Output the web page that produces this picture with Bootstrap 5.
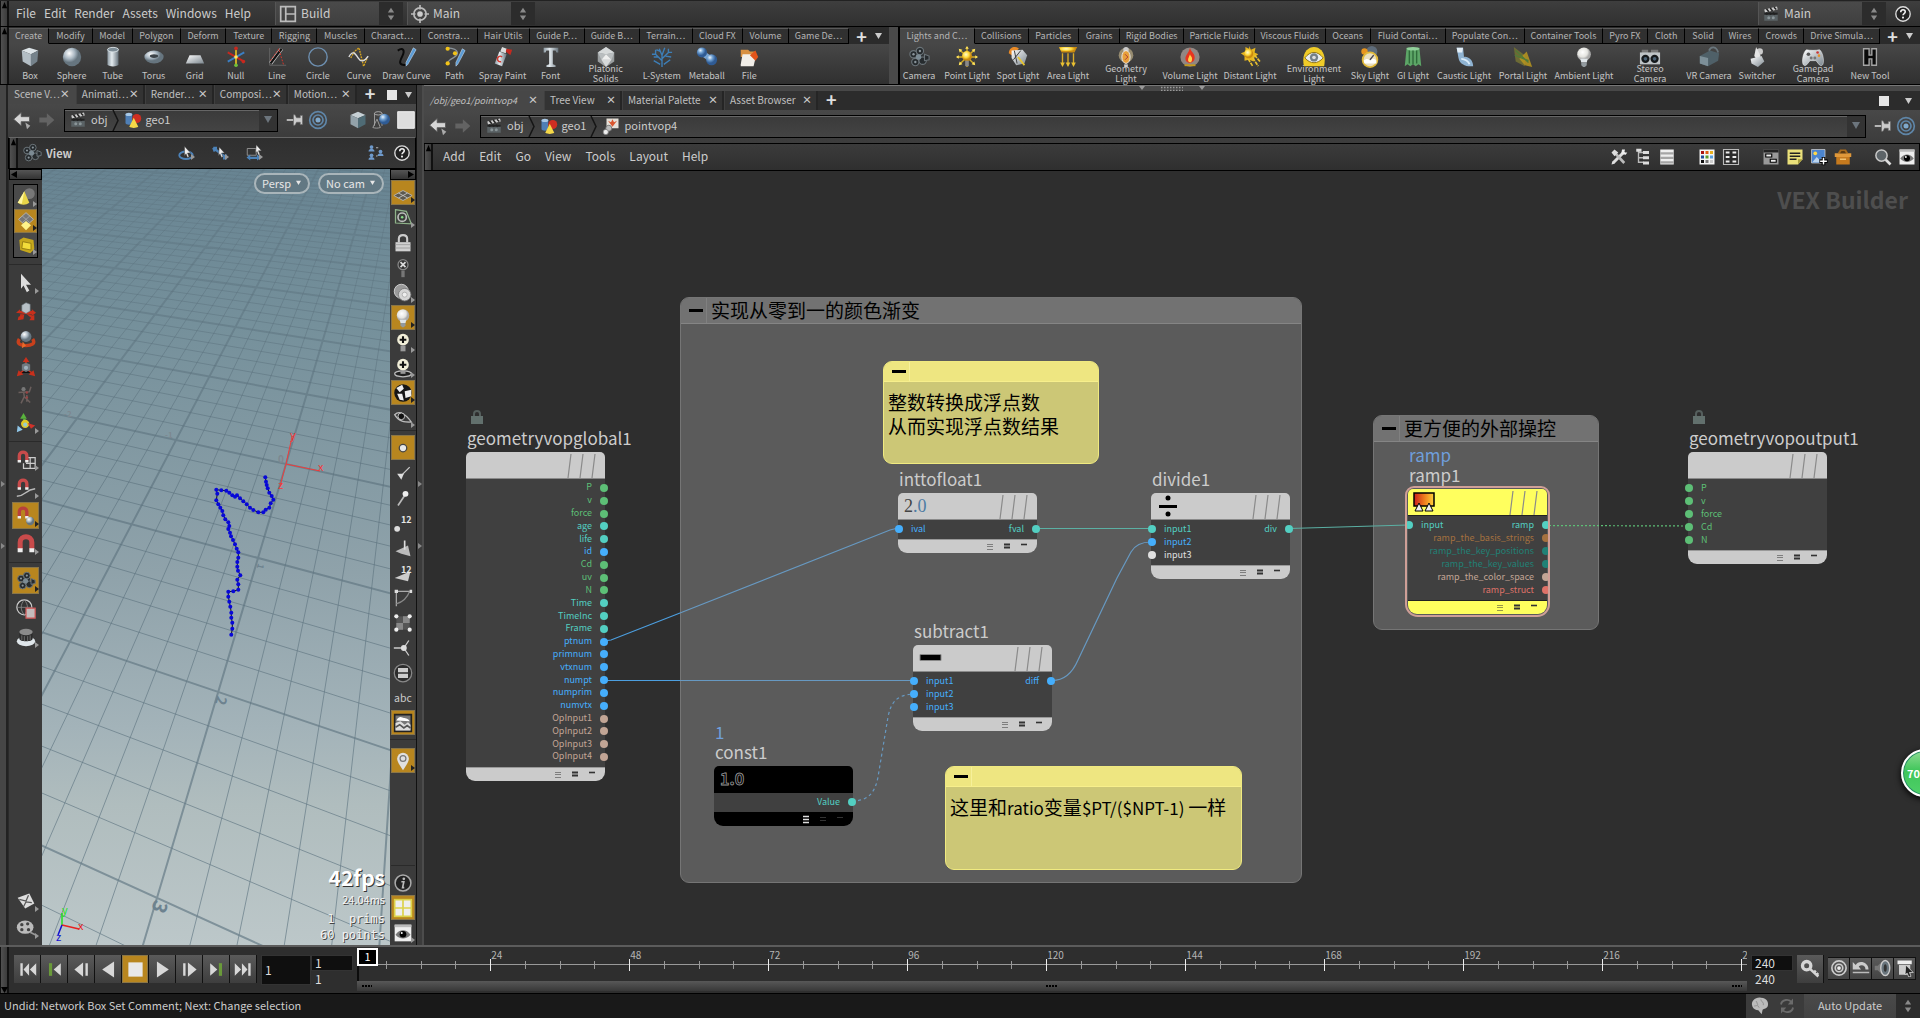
<!DOCTYPE html>
<html lang="en">
<head>
<meta charset="utf-8">
<meta name="viewport" content="width=device-width, initial-scale=1">
<title>pointvop4 - VEX Builder</title>
<link href="https://cdn.jsdelivr.net/npm/bootstrap@5.3.0/dist/css/bootstrap.min.css" rel="stylesheet">
<style>
:root{--ui:"Noto Sans CJK SC","Open Sans",sans-serif}
body{font-family:var(--ui);font-size:12px;line-height:16px;color:#ccc;background:#2e2e2e;height:100vh}
button,select,input{font:inherit;color:inherit}
.btn{--bs-btn-padding-x:0;--bs-btn-padding-y:0;--bs-btn-border-width:0;--bs-btn-font-size:inherit;--bs-btn-line-height:inherit;--bs-btn-color:#ccc;--bs-btn-border-radius:0;--bs-btn-hover-color:#fff;--bs-btn-font-family:inherit}
svg{display:block;flex:none}
.ic{width:24px;height:24px}.ic-20{width:20px;height:20px}.ic-18{width:18px;height:18px}
.mb-px{margin-bottom:1px}.min-w-0{min-width:0}.min-h-0{min-height:0}
/* main menu */
.topbar{height:27px;background:linear-gradient(#3e3e3e,#303030);border-bottom:1px solid #000;border-top:1px solid #222}
.topbar nav{padding-left:7px}
.grip-v{width:9px;background:linear-gradient(90deg,#505050,#3c3c3c);border:1px solid #111;border-width:0 2px 0 1px;flex:none}
.grip-v svg{width:7px;height:7px;margin-top:1px}
.menu-link{color:#ccc;text-decoration:none;white-space:nowrap;padding-bottom:2px}
.menu-link:hover{color:#fff}
.combo{height:23px;background:linear-gradient(#4a4a4a,#3f3f3f)}
.combo select,.auto select{appearance:none;background:transparent;border:0;outline:0;padding:0 0 2px;height:23px}
.combo .sel{width:104px;padding-left:3px;border-left:1px solid #555}
.combo .spin,.auto .spin{width:24px;align-self:stretch;background:#2c2c2c}
.desk{margin-left:16px}
/* shelves */
.shelf-row{height:58px;border-bottom:1px solid #000}
.shelf-tabs{height:17px;background:#2b2b2b}
.shelf-tab{flex:1 1 0;font-size:9px;line-height:14px;color:#b5b5b5;background:#303030;border-right:1px solid #000;border-top:1px solid #5a5a5a;border-bottom:1px solid #000;text-align:center;white-space:nowrap;overflow:hidden;margin-top:1px;padding:0;border-left:0}
.shelf-tab.active{background:#474747;border-bottom-color:#474747}
.shelf-plus{width:40px;flex:none}
.shelf-body{height:40px;background:linear-gradient(#474747,#303030)}
.tool{flex:1 1 0;min-width:0;font-size:9px;line-height:9px;white-space:nowrap;padding-top:2px}
.tool .ic{width:24px;height:22px}
.tool .cap1{padding-top:2px;line-height:12px;color:#c4c4c4}
.tool .cap2{margin-top:-4px;color:#c4c4c4;position:relative;line-height:10px}
.shelf-split{width:11px;background:#4a4a4a;border-right:2px solid #000;flex:none}
.splitbar{height:6px;background:#484848;border-top:1px solid #777}
/* panes */
.left-pane{width:424px;flex:none}
.strip{width:8px;background:#464646;border-right:2px solid #222;flex:none}
.strip2{width:8px;background:#3c3c3c;border-left:1px solid #111;border-right:2px solid #4c4c4c;flex:none}
.dots{width:4px;height:20px;background-image:radial-gradient(#888 35%,transparent 40%);background-size:2px 2px}
.strip,.strip2{gap:18px}
.pane-tabs{height:19px;background:#2c2c2c;font-size:10px;line-height:16px}
.pane-tab{background:#333;border:0;border-left:1px solid #3f3f3f;border-right:2px solid #252525;padding:0 4px 0 5px;color:#c0c0c0;white-space:nowrap;font-size:10px;line-height:17px}
.pane-tab.active{background:#474747;border-color:#474747}
.pane-tab em{font-size:9px}
.pane-tab .x{font-size:10px;font-weight:700;color:#ccc}
.plus{font-size:18px;line-height:16px;font-weight:700;color:#e0e0e0}
.pathbar{height:33px;background:linear-gradient(#484848,#3c3c3c);padding-bottom:1px}
.pathfield{height:23px;background:linear-gradient(#3a3a3a,#444);border:1px solid #000;box-shadow:inset 0 1px 0 #666;font-size:11px}
.pathfield>span{line-height:14px;padding-bottom:2px}
.pathfield .drop{width:18px;align-self:stretch;background:#333}
.chev{width:8px;height:21px;margin:0 4px}
.viewbar{height:32px;background:linear-gradient(#2f2f2f,#353535);border:1px solid #000;border-top:1px solid #666;font-size:11px}
.menubar{height:28px;background:linear-gradient(#3b3b3b,#2f2f2f);border:1px solid #000;border-width:1px 1px 1px 0}
.menubar nav{gap:14px;padding-left:10px}
.net-ic{width:18px;height:18px;margin:0 3px}
/* viewer */
.vtools{width:34px;background:#3b3b3b;flex:none;overflow:hidden;border-left:1px solid #2a2a2a}
.vtools-r{width:26px;background:#3b3b3b;flex:none;overflow:hidden}
.scroller{height:11px;background:linear-gradient(#555,#333);border:1px solid #000}
.vt{width:27px;height:27px;position:relative;flex:none}
.rt{width:24px;height:25px;position:relative;flex:none}
.on{background:#b8861f!important;box-shadow:inset 0 0 0 1px #8a7648}
.more::after{content:"";position:absolute;right:0;bottom:2px;border:3px solid transparent;border-left:4px solid #999;border-right:0}
.more.on::after{border-left-color:#222}
.mode-box{background:#4a4a4a;border:1px solid #000;width:25px;margin:4px 0 6px}
.mode-box .vt{width:23px;height:24px}
.sep{height:1px;background:#2a2a2a;align-self:stretch}
.viewport{background:linear-gradient(#688492 0,#75909b 20%,#8fa2aa 52%,#a3b3b9 72%,#b0bdbe 82%,#bcc7c9 100%)}
.cam-row{padding:4px 6px}
.cam-pill{border:2px solid #a9b5ba;border-radius:11px;height:21px;font-size:11px;line-height:14px;padding:0 6px 2px;background:#627883;color:#e6e6e6}
.fps{font-size:21px;line-height:24px;font-weight:700;margin-bottom:3px;color:#fff;text-shadow:1px 1px 0 #333}
.stat-sm{font-size:11px;line-height:15px;color:#f4f4f4;text-shadow:1px 1px 0 #444}
.stat-mono{font-family:"DejaVu Sans Mono",monospace;font-size:12px;line-height:16px;color:#f2f2f2;text-shadow:1px 1px 0 #444;white-space:pre}
.hud{right:5px;bottom:2px}
/* network canvas */
.canvas{background:#2e2e2e}
.vex{right:12px;top:10px;font-size:23px;line-height:36px;font-weight:700;color:#4e4e4e}
.netbox{background:#5b5b5b;border:1px solid #757575;border-radius:9px;overflow:hidden}
.netbox>.hd{height:26px;background:#727272;border-bottom:1px solid #858585;color:#000;font-size:19px;line-height:23px}
.min-mark{width:26px;padding-left:4px;align-self:stretch;border-right:1px solid #808080}
.min-mark i{width:14px;height:3px;background:#000}
.sticky{background:#ccc776;border:1px solid #f0ea80;border-radius:9px;overflow:hidden;color:#000}
.sticky>.hd{height:20px;background:#eee681;border-bottom:1px solid #f7ef8c}
.sticky .min-mark{border-color:#f6f09a}
.sticky p{margin:0;padding:8px 4px;font-size:19px;line-height:24px;white-space:nowrap}
.sticky .lat{font-size:17px}
.node{width:139px}
.node-name{position:absolute;bottom:100%;left:1px;font-size:17px;line-height:20px;padding-bottom:4px;white-space:nowrap;color:#ccc}
.node-name .sub{color:#6f9fdc}
.node-hd{height:27px;background:#cbcbcb;border-radius:5px 5px 0 0;border-bottom:1px solid #8a8a8a;padding-left:4px}
.node-bd{background:#404040;padding:2px 0 4px}
.node-bd.tall{height:288px}
.node-ft{height:14px;background:#cbcbcb;border-radius:0 0 9px 9px;border-top:1px solid #999;color:#333}
.port{height:13px;font-size:9px;line-height:11px;flex:0 1 13px;min-height:0;margin:0 -3px}
.port i{width:8px;height:8px;border-radius:50%;background:currentColor;margin-top:1px}
.port .lab{padding:0 8px 1px;white-space:nowrap}
.black .node-hd,.black .node-ft{background:#000;border-color:#000;color:#999}
.black .slash{display:none}
.yellow{outline:2px solid #cf9f97;outline-offset:1px;border-radius:6px 6px 10px 10px}
.yellow .node-hd,.yellow .node-ft{background:#ffff5e;border-color:#222}
.c-g{color:#5dbf76}.c-t{color:#53cfc2}.c-b{color:#45aefc}.c-p{color:#c2a595}.c-w{color:#e0e0e0}.c-br{color:#a5713f}.c-dt{color:#218176}.c-r{color:#de7268}
.bubble{right:-29px;top:578px;width:48px;height:48px;border-radius:50%;background:linear-gradient(#8fdc92,#3fc65a 45%,#4fd068);border:2px solid #fff;box-shadow:0 2px 6px #000,inset 0 0 0 1px #27886a;color:#fff;font-weight:700;font-size:11px;line-height:44px;padding:0 0 0 4px;text-align:left}
/* playbar */
.playbar{height:48px;border-top:2px solid #5c5c5c;background:#2e2e2e}
.transport{padding:8px 0 0 5px}
.pb{width:27px;height:28px;background:linear-gradient(#5a5a5a,#3e3e3e);border-right:1px solid #111!important}
.frame-in{background:#0f0f0f;border:1px solid #333;color:#ddd;font-size:12px;padding:0 3px 2px;border-radius:0}
.frame-cur{width:50px;height:30px}
.rng{width:42px;height:16px;line-height:14px}
.rng.plain{background:transparent;border-color:transparent}
.ruler{height:34px}
.ruler .base{left:0;right:0;top:17px;height:1px;background:#999}
.tick{width:1px;background:#999;top:14px;height:8px}
.tick.maj{background:#eee;top:12px;height:12px}
.tlab{font-size:10px;line-height:12px;top:2px;padding-left:1px;color:#b5b5b5}
.cursor{width:21px;height:18px;left:0;top:1px;border:2px solid #fff;background:#000;color:#fff;font-size:11px;line-height:13px;text-align:center;z-index:2}
.head{width:2px;left:0;top:19px;bottom:0;background:#0c0c0c}
.rscroll{height:10px;background:linear-gradient(#585858,#383838)}
.sm-b{width:22px;height:23px;background:linear-gradient(#5a5a5a,#444);border:1px solid #111!important;border-left:0!important}
.statusbar{height:25px;background:#191919;border-top:1px solid #000;font-size:11px;line-height:22px}
.auto{background:#3b3b3b}
.auto select{width:92px;background:linear-gradient(#4a4a4a,#424242);text-align:center;font-size:11px;height:24px}
</style>
<script src="https://cdn.jsdelivr.net/npm/bootstrap@5.3.0/dist/js/bootstrap.bundle.min.js"></script>
</head>
<body class="d-flex flex-column overflow-hidden m-0">

<svg width="0" height="0" class="position-absolute" aria-hidden="true">
<defs>
<linearGradient id="m" x1="0" x2="1" y1="0" y2="1"><stop stop-color="#fff"/><stop offset="1" stop-color="#7b868e"/></linearGradient>
<linearGradient id="mh"><stop stop-color="#8d9aa3"/><stop offset=".4" stop-color="#e4ebef"/><stop offset="1" stop-color="#66727b"/></linearGradient>
<radialGradient id="bl" cx=".35" cy=".3"><stop stop-color="#e8f4ff"/><stop offset=".5" stop-color="#6f9fd0"/><stop offset="1" stop-color="#2f5b94"/></radialGradient>
<radialGradient id="gy" cx=".35" cy=".3"><stop stop-color="#fff"/><stop offset=".6" stop-color="#a9b7c2"/><stop offset="1" stop-color="#66757f"/></radialGradient>
<radialGradient id="wh" cx=".4" cy=".35"><stop stop-color="#fff"/><stop offset=".7" stop-color="#e4e4e0"/><stop offset="1" stop-color="#aaa"/></radialGradient>
<radialGradient id="ye" cx=".4" cy=".35"><stop stop-color="#fffbd0"/><stop offset=".6" stop-color="#ffd93a"/><stop offset="1" stop-color="#c98a10"/></radialGradient>
<linearGradient id="rampg"><stop stop-color="#c81e1e"/><stop offset=".5" stop-color="#ee7a1c"/><stop offset="1" stop-color="#ffd23a"/></linearGradient>
<linearGradient id="gmi" gradientUnits="userSpaceOnUse" x1="0" x2="0" y1="0" y2="777"><stop stop-color="#5a707c" stop-opacity=".35"/><stop offset=".4" stop-color="#5a707c" stop-opacity=".6"/><stop offset="1" stop-color="#6b808b" stop-opacity=".75"/></linearGradient>
</defs>
<symbol id="up" viewBox="0 0 8 8"><path d="M4 0l3 7H1z" fill="#000"/></symbol>
<symbol id="down" viewBox="0 0 8 8"><path d="M0 1h8L4 8z" fill="currentColor"/></symbol>
<symbol id="updown" viewBox="0 0 10 18"><path d="M5 1l4 6H1zM5 17l4-6H1z" fill="#8a8a8a"/></symbol>
<symbol id="layout" viewBox="0 0 16 16"><path d="M1.500 1.500h13v13h-13zM6 1.500v13M6 8h8.500" fill="none" stroke="#bbb" stroke-width="1.500"/></symbol>
<symbol id="aim" viewBox="0 0 16 16"><circle cx="8" cy="8" r="5.500" fill="none" stroke="#bbb" stroke-width="1.500"/><circle cx="8" cy="8" r="2.500" fill="#ccc"/><path d="M8 0v4M8 12v4M0 8h4M12 8h4" stroke="#bbb" stroke-width="1.500"/></symbol>
<symbol id="clap" viewBox="0 0 24 24"><path d="M3 10h18v11H3z" fill="#5a6265"/><path d="M3 10h18v3H3z" fill="#222"/><path d="M3 6l17-4 1 4-17 4z" fill="#ccc"/><path d="M6 5l3 4M11 4l3 4M16 3l3 3M5 10l2 3M10 10l2 3M15 10l2 3" stroke="#222" stroke-width="2"/><circle cx="9" cy="17" r="2" fill="#8a9598"/><circle cx="15" cy="17" r="2" fill="#8a9598"/></symbol>
<symbol id="help" viewBox="0 0 20 20"><circle cx="10" cy="10" r="8" fill="#222" stroke="#ddd" stroke-width="1.500"/><path d="M7.500 8c0-3.500 5-3.500 5-.5 0 2-2.500 2-2.500 4" fill="none" stroke="#eee" stroke-width="1.800"/><circle cx="10" cy="14" r="1.200" fill="#eee"/></symbol>
<symbol id="box" viewBox="0 0 24 24"><path d="M3 5l8-3 10 3-8 4z" fill="#dde4e8"/><path d="M3 5l10 4v13L4 17z" fill="#b3bec5"/><path d="M13 9l8-4-1 12-7 5z" fill="#75828b"/></symbol>
<symbol id="sphere" viewBox="0 0 24 24"><circle cx="12" cy="12" r="10" fill="url(#gy)"/></symbol>
<symbol id="tube" viewBox="0 0 24 24"><path d="M6 4v16c0 3 12 3 12 0V4z" fill="url(#mh)"/><ellipse cx="12" cy="4" rx="6" ry="2.500" fill="#7d8c96" stroke="#dbe3e7"/></symbol>
<symbol id="torus" viewBox="0 0 24 24"><ellipse cx="12" cy="12" rx="10.500" ry="7" fill="url(#gy)"/><ellipse cx="12" cy="11" rx="4.500" ry="2" fill="#3c4348"/></symbol>
<symbol id="gridi" viewBox="0 0 24 24"><path d="M6 10h12l4 9H2z" fill="url(#m)"/></symbol>
<symbol id="nulli" viewBox="0 0 24 24"><path d="M12 2v20" stroke="#d8b523" stroke-width="2"/><path d="M3 7l18 10" stroke="#c8281e" stroke-width="2"/><path d="M21 7L3 17" stroke="#3b7fc4" stroke-width="2"/><circle cx="12" cy="2.500" r="2" fill="#c8281e"/><circle cx="20" cy="17" r="2" fill="#c8281e"/><circle cx="12" cy="21" r="2" fill="#6fbf3a"/><circle cx="12" cy="12" r="2" fill="#ffe860"/></symbol>
<symbol id="linei" viewBox="0 0 24 24"><path d="M4 2v19h18" stroke="#666" fill="none"/><path d="M5 19L17 3" stroke="#ccc" stroke-width="4"/><path d="M5 19L17 3" stroke="#111" stroke-width="2.500"/><path d="M5 16L14 3l5 17" stroke="#e0342a" stroke-dasharray="2 1.500" fill="none"/></symbol>
<symbol id="circle" viewBox="0 0 24 24"><circle cx="12" cy="12" r="10" fill="none" stroke="#6d8fb0" stroke-width="1.500"/></symbol>
<symbol id="curve" viewBox="0 0 24 24"><path d="M3 13L7 6l5-4 5 20 4-9" stroke="#d8a51e" stroke-dasharray="2 1" fill="none" stroke-width="1.500"/><path d="M1 12c4-8 7-4 10 1s7 4 11-2" stroke="#ddd" fill="none" stroke-width="1.500"/></symbol>
<symbol id="draw" viewBox="0 0 24 24"><path d="M3 5c6-4 8 0 5 6s-5 10 5 10" stroke="#0a0a0a" stroke-width="2.200" fill="none"/><path d="M20 2l3 2-9 16-2 2v-4z" fill="#5b9bd5" stroke="#cfe3f5" stroke-width=".6"/></symbol>
<symbol id="pathi" viewBox="0 0 24 24"><path d="M4 2c14 1 12 8 6 11S4 18 4 20" stroke="#8a939a" stroke-width="1.500" fill="none"/><circle cx="4" cy="3" r="2.300" fill="#f2c318"/><circle cx="12" cy="8" r="2.300" fill="#f2c318"/><circle cx="4" cy="19" r="2.300" fill="#f2c318"/><path d="M20 3l3 2-8 15-2 2v-4z" fill="#5b9bd5" stroke="#cfe3f5" stroke-width=".6"/></symbol>
<symbol id="spray" viewBox="0 0 24 24"><path d="M8 6l8 3-5 13-8-3z" fill="url(#mh)"/><path d="M11 1l5 2-1 5-6-2z" fill="#ddd"/><path d="M16 3l6 1-2 6-5-4z" fill="#c42a20"/><path d="M11 12a3 3 0 1 0-1 5" stroke="#d43a30" stroke-width="1.500" fill="none"/></symbol>
<symbol id="fonti" viewBox="0 0 24 24"><path d="M4 2h16v5h-2l-1-2h-3v15l3 1v2H7v-2l3-1V5H7L6 7H4z" fill="url(#mh)"/></symbol>
<symbol id="plato" viewBox="0 0 24 24"><path d="M12 1l9 6v10l-9 6-9-6V7z" fill="#9a9ea0"/><path d="M12 1l9 6-9 2-9-2zM12 23l-5-8h11z" fill="#d6d9da"/><path d="M12 9l-5 6-4-8zM12 9l6 6 3-8z" fill="#b9bdbf"/><path d="M12 9l-5 6h11z" fill="#efefef"/></symbol>
<symbol id="lsys" viewBox="0 0 24 24"><path d="M12 23V10M12 16L5 9M12 14l7-7M12 10L9 3M12 10l3-8M5 9L1 9M5 9l0-5M19 7h4M19 7V3M8 12H3M16 11l6 1M10 6L6 4M14 20l7-5M10 20l-7-4" stroke="#3d7fb8" stroke-width="1.500" fill="none"/></symbol>
<symbol id="meta" viewBox="0 0 24 24"><path d="M6 7l11 8" stroke="#7ba7d4" stroke-width="6"/><circle cx="6.500" cy="7" r="5.500" fill="url(#bl)"/><circle cx="17" cy="15" r="6" fill="url(#bl)"/></symbol>
<symbol id="file" viewBox="0 0 24 24"><path d="M3 4h8l2 2h6v6H3z" fill="#d89040"/><path d="M3 20L5 9h15l-3 13H3z" fill="#f1eee8"/><path d="M13 10l6-5 3 7-3 4z" fill="#e2541a"/></symbol>
<symbol id="cam" viewBox="0 0 24 24"><path d="M7 8h10v10H7z" fill="#2c3236"/><g fill="#262b2e" stroke="#6b7479" stroke-width="1.200"><circle cx="6" cy="9" r="4"/><circle cx="13" cy="5.500" r="4"/><circle cx="8" cy="17.500" r="4"/><circle cx="16" cy="16" r="4"/><path d="M18 9l5 2v4l-5 1z"/></g><circle cx="11.500" cy="12" r="3" fill="#7c8b94"/><circle cx="6" cy="9" r="1.300" fill="#8a949a"/><circle cx="13" cy="5.500" r="1.300" fill="#8a949a"/><circle cx="8" cy="17.500" r="1.300" fill="#8a949a"/></symbol>
<symbol id="ptl" viewBox="0 0 24 24"><path d="M12 1v22M1 12h22M4 4l16 16M20 4L4 20" stroke="#d2ac28" stroke-width="1.500"/><path d="M12 0l2 3h-4zM0 12l3-2v4zM24 12l-3-2v4zM3 3l4 1-3 3zM21 3l-4 1 3 3zM3 21l1-4 3 3zM21 21l-1-4-3 3z" fill="#ffe25a"/><circle cx="12" cy="11" r="5.500" fill="url(#ye)"/><path d="M10 16h4v6h-4z" fill="#888"/></symbol>
<symbol id="spot" viewBox="0 0 24 24"><path d="M2 8c0-8 9-8 11-5L5 10z" fill="#ea8a25"/><path d="M5 5l12-1 5 6-3 9-9 2-5-8z" fill="url(#m)"/><path d="M8 5l3 14M15 5l-8 10" stroke="#333"/><path d="M12 12l7 9" stroke="#e7c52f" stroke-width="2"/></symbol>
<symbol id="area" viewBox="0 0 24 24"><path d="M2 1h20l-3 6H5z" fill="url(#ye)"/><path d="M6 8v13M12 8v13M18 8v13" stroke="#d9ab28" stroke-width="1.500"/><path d="M3.500 18h5L6 23zM9.500 18h5L12 23zM15.500 18h5L18 23z" fill="#e8c032"/></symbol>
<symbol id="geol" viewBox="0 0 24 24"><circle cx="12" cy="10" r="8" fill="#ecd5a0" opacity=".5"/><circle cx="12" cy="4" r="3" fill="#ccc"/><ellipse cx="12" cy="12" rx="4.500" ry="7" fill="#e8a03a" stroke="#eee"/><path d="M10 20h4v3h-4z" fill="#ccc"/><path d="M11 9l3 3-3 3" stroke="#a33" fill="none"/></symbol>
<symbol id="fire" viewBox="0 0 24 24"><circle cx="12" cy="12" r="10.500" fill="#b5a5a0" opacity=".7"/><path d="M12 2c1 5 6 6 5 12-1 6-10 6-10 0 0-4 3-5 5-12z" fill="#e8351e"/><path d="M12 9c1 3 3 3 2 7-1 3-5 2-4-2z" fill="#ffd24a"/><path d="M6 20h12v2H6z" fill="#c59a1c"/></symbol>
<symbol id="dist" viewBox="0 0 24 24"><path d="M11 0l2 4 5-2-1 5 4 2-4 3-1 5-5-2-5 1 0-5-4-3 5-2 0-5 4 2z" fill="#e5b51e"/><circle cx="10.500" cy="8.500" r="5" fill="url(#ye)"/><path d="M10 14l5 8M15 13l6 9M17 10l6 7" stroke="#e9c02e" stroke-width="1.800" stroke-dasharray="4 1"/></symbol>
<symbol id="env" viewBox="0 0 24 24"><path d="M1 22C-2 8 5 1 12 1s14 7 11 21z" fill="#f0cc28"/><path d="M2 13c6-8 14-8 20 0-6 7-14 7-20 0z" fill="#e7ecef" stroke="#8a6d12"/><circle cx="12" cy="12.500" r="4.500" fill="#737f88"/><circle cx="12" cy="12.500" r="2" fill="#ddd"/></symbol>
<symbol id="sky" viewBox="0 0 24 24"><circle cx="14" cy="6" r="6" fill="#5e6c7a"/><circle cx="6" cy="6" r="3.500" fill="#e8951e"/><circle cx="12" cy="15" r="8" fill="#e9dfc0" stroke="#e0b93a" stroke-width="2"/><path d="M5 16c3-3 6-2 7 0 3-4 6-1 7 0v3H6z" fill="#fff"/><path d="M12 15l4-5" stroke="#445" stroke-width="1.500"/></symbol>
<symbol id="gi" viewBox="0 0 24 24"><path d="M5 2h14l2 20-3-2-3 2-3-2-3 2-3-2-3 2z" fill="#5da667"/><ellipse cx="12" cy="3" rx="7" ry="2" fill="#91d09a"/><path d="M8 5v14M12 5v15M16 5v14" stroke="#2f6b3a" stroke-width="1.500"/></symbol>
<symbol id="caus" viewBox="0 0 24 24"><path d="M4 2h7l1 10c4-1 10 3 10 10-7 1-15-2-16-9z" fill="#8fb3d2"/><path d="M4 2h7l-1 5H5z" fill="#e3eef7"/><path d="M9 14c4 0 8 3 9 6" stroke="#d9ebf9" stroke-width="2" fill="none"/></symbol>
<symbol id="portal" viewBox="0 0 24 24"><path d="M2 1l12 9v12L4 17z" fill="#6c6a35"/><path d="M8 14l8-8 6 17-8-2z" fill="#b9971f" opacity=".85"/><path d="M3 10l15 6M4 5l14 13" stroke="#4f7a38" stroke-width="1.500"/></symbol>
<symbol id="bulb" viewBox="0 0 24 24"><circle cx="12" cy="9" r="7.500" fill="url(#wh)"/><path d="M8 14h8l-1 4H9z" fill="#dfe5e9"/><path d="M9 18h6v3l-2 2h-2l-2-2z" fill="#929a9f"/></symbol>
<symbol id="stereo" viewBox="0 0 24 24"><path d="M3 4h7v4H3zM13 4h8v4h-8z" fill="#777"/><path d="M1 7h22v13H1z" fill="#bfc4c7"/><circle cx="7" cy="14" r="4.500" fill="#15191c"/><circle cx="17" cy="14" r="4.500" fill="#15191c"/><circle cx="7" cy="14" r="2" fill="#4b6173"/><circle cx="17" cy="14" r="2" fill="#4b6173"/></symbol>
<symbol id="vr" viewBox="0 0 24 24"><path d="M2 11l11-6 10 3-1 8-11 6-9-3z" fill="#4f6068"/><path d="M2 11l9 2v9l-9-3z" fill="#7d8f98"/><path d="M12 5c2-5 8-5 10 2" fill="none" stroke="#69767d" stroke-width="2"/></symbol>
<symbol id="switch" viewBox="0 0 24 24"><circle cx="15" cy="6" r="3.500" fill="#ccc"/><path d="M11 1l5 10-4 4-3-4z" fill="#e5e5e5"/><path d="M5 14l12-3 3 6-7 6-7-4z" fill="url(#m)"/></symbol>
<symbol id="pad" viewBox="0 0 24 24"><path d="M5 4c4 1 10 1 14 0 4 2 6 15 3 17s-5-4-7-5H9c-2 1-4 7-7 5S1 6 5 4z" fill="url(#m)" stroke="#fff" stroke-width=".5"/><circle cx="7" cy="9" r="2" fill="#555"/><circle cx="17" cy="7" r="1.400" fill="#c33"/><circle cx="18.500" cy="10.500" r="1.400" fill="#e8922a"/><circle cx="10" cy="13" r="1.600" fill="#777"/><circle cx="14" cy="13" r="1.600" fill="#777"/></symbol>
<symbol id="hlogo" viewBox="0 0 24 24"><path d="M5 3h6v7h3V3h5v18h-5v-7h-3v7H5z" fill="#0a0a0a" stroke="#a5a5a5" stroke-width="1.500"/></symbol>
<symbol id="back" viewBox="0 0 24 24"><path d="M2 11l9-8v5h10v6H11v5z" fill="#d5d5d5" stroke="#555"/><path d="M16 15l6 4-4 4z" fill="#aaa"/></symbol>
<symbol id="fwd" viewBox="0 0 24 24"><path d="M22 12l-9-8v5H4v6h9v5z" fill="#636363"/></symbol>
<symbol id="geo" viewBox="0 0 24 24"><path d="M2 4v12c0 3 9 3 9 0V4z" fill="#4f7fb5"/><ellipse cx="6.500" cy="4.500" rx="4.500" ry="2.300" fill="#a8c8e6"/><circle cx="17" cy="10" r="6" fill="#cf2e22"/><path d="M13 9l6 12c-3 2-9 2-12 0z" fill="#f5d848"/></symbol>
<symbol id="vopi" viewBox="0 0 24 24"><path d="M6 2h16v13H6z" fill="#e5e0d8"/><path d="M8 5l6 8 6-8-4 2-2-4-2 4z" fill="#d8552e"/><circle cx="9" cy="15" r="4" fill="#bbb" stroke="#666"/><circle cx="5" cy="20" r="3.500" fill="#eee" stroke="#777"/></symbol>
<symbol id="pin" viewBox="0 0 24 24"><path d="M1 12h9" stroke="#ddd" stroke-width="2"/><path d="M10 5h2l2 4h5V6h3v12h-3v-3h-5l-2 4h-2z" fill="#ccc" stroke="#666" stroke-width=".8"/></symbol>
<symbol id="target" viewBox="0 0 24 24"><g fill="none" stroke="#5f86a8" stroke-width="2"><circle cx="12" cy="12" r="10"/><circle cx="12" cy="12" r="6"/></g><circle cx="12" cy="12" r="3" fill="#7fa9cc"/></symbol>
<symbol id="cubes" viewBox="0 0 24 24"><path d="M3 6l9-4 9 4-9 4z" fill="#c6d0d5"/><path d="M3 6l9 4v12l-9-5z" fill="#93a2aa"/><path d="M12 10l9-4v11l-9 5z" fill="#4f6b75"/></symbol>
<symbol id="shapes" viewBox="0 0 24 24"><path d="M3 4v15M12 4v15" stroke="#aaa"/><ellipse cx="7.500" cy="4" rx="4.500" ry="2" fill="none" stroke="#bbb"/><circle cx="15" cy="11" r="6.500" fill="url(#bl)"/><path d="M6 11l4 10c-3 1-6 1-9 0z" fill="none" stroke="#aaa"/></symbol>
<symbol id="flat" viewBox="0 0 24 24"><path d="M2 2h20v20H2z" fill="#ddd" stroke="#fff"/></symbol>
<symbol id="orbit" viewBox="0 0 24 24"><ellipse cx="12" cy="15" rx="9" ry="5" fill="none" stroke="#4c82b8" stroke-width="2.500"/><path d="M10 3l8 9-4 0 2 5-2 1-2-5-2 3z" fill="#eee" stroke="#333" stroke-width=".6"/></symbol>
<symbol id="pan" viewBox="0 0 24 24"><path d="M3 5l18 14M3 5l2 5M3 5h5M21 19h-5M21 19l-2-5" stroke="#4c82b8" stroke-width="3"/><path d="M11 4l7 8h-4l2 5-2 1-2-5-2 3z" fill="#eee" stroke="#333" stroke-width=".6"/></symbol>
<symbol id="dolly" viewBox="0 0 24 24"><path d="M3 6h12v9H3z" fill="#333" stroke="#aaa"/><path d="M2 18l5-4v3h9v-3l6 4-6 4v-2H7v2z" fill="#4c82b8"/><path d="M15 1l7 8h-4l2 5-2 1-2-5-2 2z" fill="#eee" stroke="#333" stroke-width=".6"/></symbol>
<symbol id="people" viewBox="0 0 24 24"><g fill="#6f9acb"><circle cx="6" cy="4" r="2.500"/><path d="M2 10c0-5 8-5 8 0z"/><circle cx="6" cy="15" r="2.500"/><path d="M2 21c0-5 8-5 8 0z"/><circle cx="18" cy="10" r="2.500"/><path d="M14 16c0-5 8-5 8 0z"/></g><path d="M12 5h3M12 16h2" stroke="#ddd"/></symbol>
<symbol id="wrench" viewBox="0 0 24 24"><path d="M4 20L19 5" stroke="#ddd" stroke-width="4"/><path d="M2 22l4-1-3-3z" fill="#ddd"/><path d="M7 7l12 13" stroke="#bbb" stroke-width="3.500"/><path d="M2 6l4-4 5 4-5 5z" fill="#ddd"/><path d="M16 2l-1 6 6 1 2-3-4 0 1-4z" fill="#eee"/></symbol>
<symbol id="tree" viewBox="0 0 24 24"><path d="M6 4v15h7M6 6h7M6 13h7" stroke="#bbb" fill="none" stroke-width="1.800"/><path d="M12 4h8v4h-8zM12 11h8v4h-8zM12 18h8v4h-8zM3 1h7v4H3z" fill="#ddd"/></symbol>
<symbol id="rows" viewBox="0 0 24 24"><path d="M3 2h18v20H3z" fill="#eee"/><path d="M3 7h18M3 13h18M3 19h18" stroke="#a5a5a5" stroke-width="3"/></symbol>
<symbol id="palette" viewBox="0 0 24 24"><path d="M2 2h20v20H2z" fill="#f5f5f5"/><path d="M4 4h4v4H4z" fill="#a11"/><path d="M10 4h4v4h-4z" fill="#e05a10"/><path d="M16 4h4v4h-4z" fill="#e8b020"/><path d="M4 10h4v4H4z" fill="#234b9a"/><path d="M10 10h4v4h-4z" fill="#5a9a2a"/><path d="M16 10h4v4h-4z" fill="#5aa0e0"/><path d="M4 16h4v4H4z" fill="#111"/><path d="M10 16h4v4h-4z" fill="#777"/><path d="M16 16h4v4h-4z" fill="#ccc"/></symbol>
<symbol id="cells" viewBox="0 0 24 24"><path d="M2 2h20v20H2z" fill="#2b2b2b" stroke="#bbb" stroke-width="1.500"/><path d="M5 6h5M14 6h5M5 12h5M14 12h5M5 18h5M14 18h5" stroke="#eee" stroke-width="2.500"/></symbol>
<symbol id="netb" viewBox="0 0 24 24"><path d="M2 2h20v20H2z" fill="#999"/><path d="M2 2h20v4H2z" fill="#222"/><path d="M5 8h8v4H5zM11 15h8v4h-8z" fill="#eee" stroke="#000" stroke-width="1.500"/></symbol>
<symbol id="note" viewBox="0 0 24 24"><path d="M2 2h20v13l-6 7H2z" fill="#eae07a"/><path d="M16 22v-7h6z" fill="#a99f3e"/><path d="M5 7h14M5 11h14M5 15h9" stroke="#222" stroke-width="1.800"/></symbol>
<symbol id="img" viewBox="0 0 24 24"><path d="M2 2h18v18H2z" fill="#4c85cf" stroke="#ccc"/><circle cx="7" cy="7" r="2.500" fill="#ffd94a"/><path d="M3 19l6-7 4 4 3-3 4 6z" fill="#bcd5ef"/><path d="M18 12v11M12.500 17.500h11" stroke="#000" stroke-width="5"/><path d="M18 13v9M13.500 17.500h9" stroke="#fff" stroke-width="2"/></symbol>
<symbol id="crate" viewBox="0 0 24 24"><path d="M1 7h22v5H1z" fill="#e0983a"/><path d="M3 12h18v10H3z" fill="#c67a1e"/><path d="M5 7l3-5h8l3 5z" fill="#a86a1c"/><path d="M8 7l2-3h4l2 3z" fill="#5d3a10"/><path d="M8 14h8v2H8z" fill="#f0c070"/></symbol>
<symbol id="mag" viewBox="0 0 24 24"><path d="M15 15l7 7" stroke="#ddd" stroke-width="3.500"/><circle cx="10" cy="10" r="7.500" fill="#5d6468" stroke="#c9c9c9" stroke-width="2"/></symbol>
<symbol id="eye" viewBox="0 0 24 24"><path d="M2 2h20v20H2z" fill="#eee"/><path d="M2 2h20v3H2z" fill="#bbb"/><path d="M3 14c5-7 13-7 18 0-5 6-13 6-18 0z" fill="#777"/><circle cx="12" cy="13.500" r="4" fill="#000"/><circle cx="10.500" cy="12" r="1.200" fill="#fff"/></symbol>
<symbol id="cone" viewBox="0 0 24 24"><circle cx="16" cy="8" r="6.500" fill="#777"/><path d="M10 5l6 14c-4 3-10 3-14 0z" fill="#e8d548"/><path d="M10 5L7 20l-5-1z" fill="#fff7a0"/></symbol>
<symbol id="comp" viewBox="0 0 24 24"><path d="M12 2l9 8-9 8-9-8z" fill="#777" stroke="#bbb"/><path d="M7.500 6l9 8M16.500 6l-9 8" stroke="#aaa"/><path d="M12 12l6 5-6 6-6-6z" fill="#fff38a"/></symbol>
<symbol id="ybox" viewBox="0 0 24 24"><path d="M4 6l5-3 12 3 1 11-5 5L5 18z" fill="#c6a81c"/><path d="M8 8l10 2v8L7 16z" fill="#f2dc3a" stroke="#8a7410"/></symbol>
<symbol id="arrow" viewBox="0 0 24 24"><path d="M6 1l12 13h-6l4 7-3 2-4-8-3 4z" fill="#ddd"/></symbol>
<symbol id="mv" viewBox="0 0 24 24"><path d="M0 14l5-4v2h14v-2l5 4-5 4v-2h-6l5 4-2 3h6v-6M11 16H5v2zM3 19l7-3-1 6-7 1z" fill="#c8301c"/><path d="M7 5l5-3 5 2v8l-5 3-5-3z" fill="#b7c0c6" stroke="#69747b" stroke-width=".7"/></symbol>
<symbol id="rotv" viewBox="0 0 24 24"><path d="M4 12c-4 6 2 8 8 8s12-2 8-8" stroke="#c8401c" stroke-width="4" fill="none"/><path d="M8 15l4 5-5 3z" fill="#e86a2a"/><circle cx="12" cy="9" r="6.500" fill="url(#gy)"/></symbol>
<symbol id="scl" viewBox="0 0 24 24"><path d="M12 0l4 6H8zM1 23l2-7 6 5zM23 23l-2-7-6 5z" fill="#c8301c"/><path d="M12 6v8M5 19l7-5 7 5" stroke="#c8301c" stroke-width="2"/><path d="M7 9l5-2 5 2v7l-5 2-5-2z" fill="#70797f"/><circle cx="12" cy="13" r="2.500" fill="#9fb1bb"/></symbol>
<symbol id="pose" viewBox="0 0 24 24"><circle cx="9" cy="5" r="2.500" fill="#777"/><path d="M9 8l1 6-4 8M10 14l7 7M3 9l13-1 2-6M13 12v8" stroke="#6b5f5d" stroke-width="1.800" fill="none"/><circle cx="13" cy="9" r="1.500" fill="#944"/><circle cx="13" cy="15" r="1.500" fill="#944"/></symbol>
<symbol id="handle" viewBox="0 0 24 24"><path d="M9 0l4 7H5z" fill="#58b33c"/><path d="M10 7v7" stroke="#58b33c" stroke-width="3"/><circle cx="11" cy="13" r="5" fill="#e4c925"/><path d="M14 12l9 3-5 4z" fill="#d0322a"/><path d="M1 23l1-8 6 5z" fill="#8fc6e8"/><circle cx="11" cy="14" r="2.500" fill="#9cc"/></symbol>
<symbol id="mag1" viewBox="0 0 24 24"><path d="M12 9h11v13H9v-6M12 16h11M17 9v13" stroke="#ccc" fill="none" stroke-width="1.500"/><path d="M4 13V7c0-6 9-6 9 0v6" fill="none" stroke="#c94b4b" stroke-width="4"/><path d="M2 12h4v3H2zM11 12h4v3h-4z" fill="#eee"/></symbol>
<symbol id="mag2" viewBox="0 0 24 24"><path d="M1 22c10 0 10-8 22-9" stroke="#bbb" fill="none" stroke-width="1.800"/><path d="M4 12V7c0-6 9-6 9 0v5" fill="none" stroke="#c94b4b" stroke-width="4"/><path d="M2 11h4v3H2zM11 11h4v3h-4z" fill="#eee"/></symbol>
<symbol id="mag3" viewBox="0 0 24 24"><path d="M4 13V7c0-6 9-6 9 0v6" fill="none" stroke="#b8403c" stroke-width="4"/><path d="M2 12h4v3H2zM11 12h4v3h-4z" fill="#eee"/><circle cx="17" cy="18" r="5" fill="url(#gy)"/></symbol>
<symbol id="mag4" viewBox="0 0 24 24"><path d="M5 18V10c0-9 14-9 14 0v8" fill="none" stroke="#c94b4b" stroke-width="6"/><path d="M2 17h6v5H2zM16 17h6v5h-6z" fill="#eee"/></symbol>
<symbol id="globe" viewBox="0 0 24 24"><circle cx="10" cy="10" r="9" fill="#333" stroke="#ccc" stroke-width="1.500"/><path d="M10 1c-5 6-5 12 0 18M10 1c5 6 5 12 0 18M1 10h18" stroke="#888" fill="none"/><path d="M12 11h11v12H12z" fill="#c4bcbc" stroke="#d05555" stroke-width="1.500"/></symbol>
<symbol id="dial" viewBox="0 0 24 24"><ellipse cx="12" cy="17" rx="11" ry="6" fill="#dfe6ea"/><path d="M4 6v8c0 4 16 4 16 0V6z" fill="#2c2c2c"/><ellipse cx="12" cy="6" rx="8" ry="4" fill="#8a8a8a"/><path d="M7 10v6M10 11v6M14 11v6M17 10v6" stroke="#777"/></symbol>
<symbol id="rend" viewBox="0 0 24 24"><path d="M2 8l14-5 6 12-11 6z" fill="#ddd"/><path d="M4 10l8 2 3-7M9 19l3-6 7 1" stroke="#555" fill="none" stroke-width="1.500"/></symbol>
<symbol id="reel" viewBox="0 0 24 24"><ellipse cx="11" cy="11" rx="10" ry="8" fill="#bbb"/><g fill="#444"><circle cx="7" cy="8" r="2"/><circle cx="14" cy="7" r="2"/><circle cx="7" cy="14" r="2"/><circle cx="15" cy="14" r="2"/></g><path d="M17 17l6 3" stroke="#999" stroke-width="2"/></symbol>
<symbol id="gplane" viewBox="0 0 24 24"><path d="M12 9l11 6-11 6-11-6z" fill="#5d5a50" stroke="#bbb"/><path d="M6.500 12l11 6M17.500 12l-11 6" stroke="#ccc"/></symbol>
<symbol id="cplane" viewBox="0 0 24 24"><path d="M3 2l13 2 6 15-19-1z" fill="#3a3f3a" stroke="#8fb38a" stroke-width="1.500"/><circle cx="11" cy="11" r="5" fill="none" stroke="#bbb" stroke-width="2"/><circle cx="11" cy="11" r="1.500" fill="#8d8"/></symbol>
<symbol id="lock" viewBox="0 0 24 24"><path d="M7 11V7c0-6 10-6 10 0v4" fill="none" stroke="#ccc" stroke-width="2.500"/><path d="M3 11h18v11H3z" fill="#d0d0d0"/><path d="M3 14h18M3 18h18" stroke="#999"/></symbol>
<symbol id="bx" viewBox="0 0 24 24"><circle cx="12" cy="8" r="6" fill="#333" stroke="#888" stroke-width="1.500"/><path d="M9 5l6 6M15 5l-6 6" stroke="#ddd" stroke-width="2"/><path d="M10 15h4v8h-4z" fill="#777"/></symbol>
<symbol id="bb" viewBox="0 0 24 24"><circle cx="10" cy="10" r="8.500" fill="#9a9a9a" stroke="#ddd"/><circle cx="14" cy="14" r="7.500" fill="#d5d5d5" stroke="#777"/><circle cx="14" cy="14" r="3" fill="#eee" stroke="#aaa"/></symbol>
<symbol id="bplus" viewBox="0 0 24 24"><circle cx="12" cy="8" r="7" fill="#f1eed8"/><path d="M12 4v8M8 8h8" stroke="#111" stroke-width="2.500"/><path d="M9 15h6v7H9z" fill="#999"/></symbol>
<symbol id="bring" viewBox="0 0 24 24"><ellipse cx="12" cy="19" rx="10" ry="3.500" fill="#222" stroke="#bbb" stroke-width="1.500"/><circle cx="12" cy="8" r="7" fill="#f1eed8"/><path d="M12 4v8M8 8h8" stroke="#111" stroke-width="2.500"/><path d="M9 15h6v4H9z" fill="#999"/></symbol>
<symbol id="check" viewBox="0 0 24 24"><circle cx="12" cy="12" r="10.500" fill="#161616"/><path d="M4 6l7-4 2 5-5 4zM14 10l8-2 0 8-7 2zM5 13l6 0 2 8-5-1z" fill="#eee"/></symbol>
<symbol id="vis" viewBox="0 0 24 24"><path d="M2 8c6-6 14 0 20 9-8 0-15 0-20-9z" fill="none" stroke="#bbb" stroke-width="1.600"/><circle cx="10" cy="10" r="4" fill="#111" stroke="#ddd"/></symbol>
<symbol id="dot" viewBox="0 0 24 24"><circle cx="12" cy="12" r="4.500" fill="#e8e8e8" stroke="#444" stroke-width="1.500"/></symbol>
<symbol id="nrm" viewBox="0 0 24 24"><path d="M9 16L20 5" stroke="#ccc" stroke-width="1.500"/><path d="M5 13h8l-3 7z" fill="#ddd"/></symbol>
<symbol id="needle" viewBox="0 0 24 24"><path d="M6 21L14 9" stroke="#bbb" stroke-width="2"/><circle cx="15" cy="7" r="3.500" fill="#eee"/></symbol>
<symbol id="n12" viewBox="0 0 24 24"><circle cx="5" cy="19" r="3.500" fill="#ddd"/></symbol>
<symbol id="flag" viewBox="0 0 24 24"><path d="M3 16l15-7 3 13-11-3z" fill="#bbb"/><path d="M14 14V3" stroke="#ddd" stroke-width="2"/></symbol>
<symbol id="tri" viewBox="0 0 24 24"><path d="M2 18l19-8-3 12z" fill="#ccc"/></symbol>
<symbol id="corner" viewBox="0 0 24 24"><path d="M4 22V4h18" stroke="#aaa" fill="none" stroke-width="1.500"/><path d="M4 19C12 17 17 12 20 4" stroke="#888" fill="none" stroke-width="1.500"/><path d="M2 2h4v4H2zM20 2h3v4h-3z" fill="#ddd"/></symbol>
<symbol id="uvg" viewBox="0 0 24 24"><path d="M4 4h16v16H4z" fill="#555"/><path d="M12 4h8v8h-8zM4 12h8v8H4z" fill="#888"/><g fill="#eee"><circle cx="4" cy="4" r="2.500"/><circle cx="20" cy="4" r="2.500"/><circle cx="4" cy="20" r="2.500"/><circle cx="20" cy="20" r="2.500"/></g></symbol>
<symbol id="ax3" viewBox="0 0 24 24"><path d="M13 12L1 12M13 12l6-9M13 12l6 9" stroke="#ccc" stroke-width="1.600"/><circle cx="13" cy="12" r="3.500" fill="#ddd"/></symbol>
<symbol id="eq" viewBox="0 0 24 24"><circle cx="12" cy="12" r="10.500" fill="#2c2c2c" stroke="#888" stroke-width="1.500"/><path d="M6 6h12v5H6zM6 13h12v5H6z" fill="#ccc"/></symbol>
<symbol id="pic" viewBox="0 0 24 24"><path d="M2 2h20v20H2z" fill="#777" stroke="#222" stroke-width="2"/><path d="M3 12l6-2 5 4 4-3 3 3v7H3z" fill="#ddd"/><path d="M4 9c4-7 7-3 9-3s6 1 7 4z" fill="#fff"/><path d="M3 17l5-3 5 4 4-3 4 3" stroke="#555" fill="none" stroke-width="2"/></symbol>
<symbol id="mark" viewBox="0 0 24 24"><path d="M12 23C6 14 5 12 5 9a7 7 0 0 1 14 0c0 3-1 5-7 14z" fill="#e0e0e0"/><circle cx="12" cy="9" r="3.500" fill="none" stroke="#777" stroke-width="1.500"/></symbol>
<symbol id="info" viewBox="0 0 24 24"><circle cx="12" cy="12" r="9.500" fill="#222" stroke="#aaa" stroke-width="1.800"/><circle cx="13" cy="7" r="1.600" fill="#bbb"/><path d="M10 10.500h3l-1.500 7h2" stroke="#bbb" stroke-width="2" fill="none"/></symbol>
<symbol id="four" viewBox="0 0 24 24"><path d="M1 1h22v22H1z" fill="#dcd24a"/><path d="M3 3h8v8H3zM13 3h8v8h-8zM3 13h8v8H3zM13 13h8v8h-8z" fill="#eee"/></symbol>
<symbol id="key" viewBox="0 0 24 24"><circle cx="8" cy="8" r="5" fill="none" stroke="#d5d5d5" stroke-width="4"/><path d="M11 11l11 10M16 17l3-3M19 20l3-3" stroke="#d5d5d5" stroke-width="3"/></symbol>
<symbol id="rt1" viewBox="0 0 24 24"><g fill="none" stroke="#ccc" stroke-width="2.200"><circle cx="12" cy="12" r="9.500"/><circle cx="12" cy="12" r="5"/></g><circle cx="12" cy="12" r="2.500" fill="#eee"/></symbol>
<symbol id="loop" viewBox="0 0 24 24"><path d="M5 8C8 1 22 3 22 14h-4c0-6-6-7-9-4l3 4H1V4z" fill="#ccc"/><path d="M1 17h22v2H1z" fill="#bbb"/></symbol>
<symbol id="spk" viewBox="0 0 24 24"><path d="M1 9h4l6-6v18l-6-6H1z" fill="#777"/><ellipse cx="15" cy="12" rx="6" ry="10" fill="#69757d" stroke="#ccc" stroke-width="1.800"/><ellipse cx="15" cy="12" rx="2" ry="5" fill="#333"/></symbol>
<symbol id="pop" viewBox="0 0 24 24"><path d="M2 2h19v5H2z" fill="#eee"/><path d="M4 8h15v13H4z" fill="#ccc"/><path d="M13 8l10 10h-5l2 5-3 1-2-5-3 2z" fill="#222" stroke="#ddd"/></symbol>
<symbol id="brain" viewBox="0 0 24 24"><path d="M3 13C0 6 7 1 13 2c8 0 10 7 8 11-2 3-5 2-6 4l-1 5-4-5c-3 0-6-1-7-4z" fill="#bbb"/><path d="M7 6c2 1 1 4 3 5M13 4c0 3 4 3 3 7M5 12c3 0 4-2 6 2" stroke="#888" fill="none"/></symbol>
<symbol id="recyc" viewBox="0 0 24 24"><path d="M4 10C5 3 15 2 18 7M20 14c-1 7-11 8-14 3" fill="none" stroke="#6b6b6b" stroke-width="2.500"/><path d="M20 2v8h-7zM4 22v-8h7z" fill="#6b6b6b"/></symbol>
<symbol id="slashes" viewBox="0 0 40 27"><path d="M6 2L3 26M18 2l-3 24M30 2l-3 24" stroke="#8a8a8a" stroke-width="1.200"/></symbol>
<symbol id="cooks" viewBox="0 0 44 14"><path d="M2 4.500h6M2 6.500h6M2 9.500h6" stroke="currentColor" opacity=".5"/><path d="M19 4.500h6M19 7.500h6" stroke="currentColor" stroke-width="1.800"/><path d="M36 4.500h6" stroke="currentColor" stroke-width="1.600"/></symbol>
<symbol id="cooksd" viewBox="0 0 44 14"><path d="M2 3.500h6M2 6.500h6M2 9.500h6" stroke="#ddd" stroke-width="1.500"/><path d="M19 4.500h6M19 7.500h6M36 4.500h6" stroke="#333"/></symbol>
<symbol id="triR" viewBox="0 0 4 6"><path d="M0 0l4 3-4 3z" fill="#888"/></symbol>
</svg>

<header class="topbar d-flex align-items-stretch">
  <div class="grip-v"><svg><use href="#up"/></svg></div>
  <nav class="d-flex align-items-center gap-2 flex-grow-1" aria-label="Main menu">
    <a class="menu-link" href="#">File</a><a class="menu-link" href="#">Edit</a><a class="menu-link" href="#">Render</a><a class="menu-link" href="#">Assets</a><a class="menu-link" href="#">Windows</a><a class="menu-link" href="#">Help</a>
    <div class="desk d-flex gap-1">
      <div class="combo d-flex align-items-center">
        <label class="sel d-flex align-items-center gap-1"><svg class="ic-18"><use href="#layout"/></svg><select aria-label="Desktop"><option>Build</option></select></label>
        <span class="spin d-flex align-items-center justify-content-center"><svg width="8" height="14"><use href="#updown"/></svg></span>
      </div>
      <div class="combo d-flex align-items-center">
        <label class="sel d-flex align-items-center gap-1"><svg class="ic-18"><use href="#aim"/></svg><select aria-label="Radial menu"><option>Main</option></select></label>
        <span class="spin d-flex align-items-center justify-content-center"><svg width="8" height="14"><use href="#updown"/></svg></span>
      </div>
    </div>
  </nav>
  <div class="combo d-flex align-items-center my-auto">
    <label class="sel d-flex align-items-center gap-1"><svg class="ic-18"><use href="#clap"/></svg><select aria-label="Take"><option>Main</option></select></label>
    <span class="spin d-flex align-items-center justify-content-center"><svg width="8" height="14"><use href="#updown"/></svg></span>
  </div>
  <button class="btn px-2" aria-label="Help"><svg class="ic-18"><use href="#help"/></svg></button>
</header>

<section class="shelf-row d-flex">
  <div class="grip-v"><svg><use href="#up"/></svg></div>
  <div class="d-flex flex-column" id="shelf1" data-w="880"></div>
  <div class="shelf-split d-flex align-items-center justify-content-center"><div class="dots"></div></div>
  <div class="d-flex flex-column" id="shelf2" data-w="1020"></div>
</section>

<main class="d-flex flex-grow-1 min-h-0">
  <section class="left-pane d-flex">
    <div class="strip d-flex flex-column align-items-center justify-content-center"><svg width="4" height="6"><use href="#triR"/></svg><div class="dots"></div><svg width="4" height="6"><use href="#triR"/></svg></div>
    <div class="d-flex flex-column flex-grow-1 min-w-0">
      <div class="pane-tabs d-flex" id="ltabs"></div>
      <div class="pathbar d-flex align-items-center">
        <button class="btn ps-1" aria-label="Back"><svg class="ic-20"><use href="#back"/></svg></button>
        <button class="btn ms-1" aria-label="Forward"><svg class="ic-20"><use href="#fwd"/></svg></button>
        <div class="pathfield d-flex align-items-center flex-grow-1 ms-2 ps-1">
          <svg class="ic-18"><use href="#clap"/></svg><span class="ps-1">obj</span>
          <svg class="chev" viewBox="0 0 8 21"><path d="M1 0l5 10.500L1 21" fill="none" stroke="#151515" stroke-width="1.500"/></svg>
          <svg class="ic-18"><use href="#geo"/></svg><span class="ps-1">geo1</span>
          <span class="drop ms-auto d-flex align-items-center justify-content-center text-secondary"><svg width="8" height="8"><use href="#down"/></svg></span>
        </div>
        <div class="d-flex align-items-center gap-1 ps-2">
          <svg class="ic-18"><use href="#pin"/></svg><svg class="ic-20 me-3"><use href="#target"/></svg>
          <svg class="ic-20"><use href="#cubes"/></svg><svg class="ic-20"><use href="#shapes"/></svg><svg class="ic-20"><use href="#flat"/></svg>
        </div>
      </div>
      <div class="viewbar d-flex">
        <div class="grip-v"><svg><use href="#up"/></svg></div>
        <div class="d-flex align-items-center flex-grow-1 ps-1">
          <svg class="ic-20"><use href="#cam"/></svg><strong class="ps-1 flex-grow-1">View</strong>
          <div class="d-flex gap-3 me-auto">
            <button class="btn more position-relative" aria-label="Tumble"><svg class="ic-18"><use href="#orbit"/></svg></button>
            <button class="btn more position-relative" aria-label="Pan"><svg class="ic-18"><use href="#pan"/></svg></button>
            <button class="btn more position-relative" aria-label="Dolly"><svg class="ic-18"><use href="#dolly"/></svg></button>
          </div>
          <div class="flex-grow-1"></div>
          <svg class="ic-18 me-1"><use href="#people"/></svg><svg class="ic-18 mx-1"><use href="#help"/></svg>
        </div>
      </div>
      <div class="d-flex flex-grow-1 min-h-0">
        <div class="vtools d-flex flex-column align-items-center" id="vleft"></div>
        <div class="viewport flex-grow-1 position-relative overflow-hidden">
          <svg class="position-absolute top-0 start-0 w-100 h-100" id="scene"></svg>
          <div class="cam-row d-flex justify-content-end gap-2 position-relative">
            <button class="btn cam-pill d-flex align-items-center gap-1">Persp<svg width="7" height="5"><use href="#down"/></svg></button>
            <button class="btn cam-pill d-flex align-items-center gap-1">No cam<svg width="7" height="5"><use href="#down"/></svg></button>
          </div>
          <div class="hud position-absolute text-end">
            <div class="fps">42fps</div><div class="stat-sm mb-1">24.04ms</div>
            <div class="stat-mono">1  prims</div><div class="stat-mono">60 points</div>
          </div>
        </div>
        <div class="vtools-r d-flex flex-column align-items-center" id="vright"></div>
      </div>
    </div>
    <div class="strip2 d-flex flex-column align-items-center justify-content-center"><svg width="4" height="6"><use href="#triR"/></svg><div class="dots"></div><svg width="4" height="6"><use href="#triR"/></svg></div>
  </section>

  <section class="d-flex flex-column flex-grow-1 min-w-0">
    <div class="splitbar d-flex align-items-center justify-content-center"><svg width="66" height="6"><path d="M0 0h6L3 4zM60 0h6l-3 4z" fill="#999"/><path d="M22 1.500h22M22 4.500h22" stroke="#999" stroke-width="1.500" stroke-dasharray="1.500 1.500"/></svg></div>
    <div class="pane-tabs d-flex" id="rtabs"></div>
    <div class="pathbar d-flex align-items-center">
      <button class="btn ps-1" aria-label="Back"><svg class="ic-20"><use href="#back"/></svg></button>
      <button class="btn ms-1" aria-label="Forward"><svg class="ic-20"><use href="#fwd"/></svg></button>
      <div class="pathfield d-flex align-items-center flex-grow-1 ms-2 ps-1">
        <svg class="ic-18"><use href="#clap"/></svg><span class="ps-1">obj</span>
        <svg class="chev" viewBox="0 0 8 21"><path d="M1 0l5 10.500L1 21" fill="none" stroke="#151515" stroke-width="1.500"/></svg>
        <svg class="ic-18"><use href="#geo"/></svg><span class="ps-1">geo1</span>
        <svg class="chev" viewBox="0 0 8 21"><path d="M1 0l5 10.500L1 21" fill="none" stroke="#151515" stroke-width="1.500"/></svg>
        <svg class="ic-18"><use href="#vopi"/></svg><span class="ps-1">pointvop4</span>
        <span class="drop ms-auto d-flex align-items-center justify-content-center text-secondary"><svg width="8" height="8"><use href="#down"/></svg></span>
      </div>
      <div class="d-flex align-items-center gap-1 ps-2 pe-1"><svg class="ic-18"><use href="#pin"/></svg><svg class="ic-20"><use href="#target"/></svg></div>
    </div>
    <div class="menubar d-flex">
      <div class="grip-v"><svg><use href="#up"/></svg></div>
      <nav class="d-flex align-items-center flex-grow-1" aria-label="Network menu">
        <a class="menu-link" href="#">Add</a><a class="menu-link" href="#">Edit</a><a class="menu-link" href="#">Go</a><a class="menu-link" href="#">View</a><a class="menu-link" href="#">Tools</a><a class="menu-link" href="#">Layout</a><a class="menu-link" href="#">Help</a>
      </nav>
      <div class="d-flex align-items-center" id="nettools"></div>
    </div>
    <div class="canvas flex-grow-1 position-relative overflow-hidden" id="canvas">
      <div class="vex position-absolute">VEX Builder</div>
      <button class="btn bubble position-absolute">70</button>
    </div>
  </section>
</main>

<section class="playbar d-flex">
  <div class="grip-v d-flex align-items-end text-black"><svg><use href="#down"/></svg></div>
  <div class="transport d-flex align-items-start" id="transport"></div>
  <input class="frame-in frame-cur mt-2 ms-1" value="1" aria-label="Current frame">
  <div class="d-flex flex-column pt-1"><input class="frame-in rng mt-1" value="1" aria-label="Range start"><input class="frame-in rng plain" value="1" aria-label="Global start"></div>
  <div class="d-flex flex-column flex-grow-1 min-w-0 ms-1">
    <div class="ruler position-relative overflow-hidden" id="ruler"><div class="base position-absolute"></div><div class="cursor position-absolute">1</div><div class="head position-absolute"></div></div>
    <div class="rscroll d-flex justify-content-between align-items-center px-1"><svg width="12" height="4"><path d="M1 2h10" stroke="#000" stroke-width="2" stroke-dasharray="2 1"/></svg><svg width="12" height="4"><path d="M0 2h12" stroke="#000" stroke-width="2" stroke-dasharray="2 1"/></svg><svg width="12" height="4"><path d="M1 2h10" stroke="#000" stroke-width="2" stroke-dasharray="2 1"/></svg></div>
  </div>
  <div class="d-flex flex-column pt-1 ms-1"><input class="frame-in rng mt-1" value="240" aria-label="Range end"><input class="frame-in rng plain" value="240" aria-label="Global end"></div>
  <div class="d-flex align-items-start pt-2 ps-1">
    <button class="btn pb d-flex align-items-center justify-content-center" aria-label="Set key"><svg class="ic-20"><use href="#key"/></svg></button>
  </div>
  <div class="d-flex align-items-center px-1 pb-1" id="pbopts"></div>
</section>

<footer class="statusbar d-flex">
  <div class="flex-grow-1 ps-1">Undid: Network Box Set Comment; Next: Change selection</div>
  <div class="auto d-flex align-items-center ps-1 gap-2">
    <svg class="ic-20"><use href="#brain"/></svg><svg class="ic-18"><use href="#recyc"/></svg>
    <div class="d-flex align-items-center"><select aria-label="Update mode"><option>Auto Update</option></select><span class="spin d-flex align-items-center justify-content-center"><svg width="8" height="14"><use href="#updown"/></svg></span></div>
  </div>
</footer>

<script>
const $=id=>document.getElementById(id);
const ic=(n,c='ic')=>`<svg class="${c}"><use href="#${n}"/></svg>`;
// Shelves: [label, relative width] for tabs, [label, icon, relative width] for tools
function shelf(id,tabs,tools,rest){
  const el=$(id);el.style.flex=el.dataset.w+' 1 0';
  el.innerHTML=`<div class="shelf-tabs d-flex">${tabs.map((t,i)=>`<button class="shelf-tab${i?'':' active'}" style="flex-grow:${t[1]}">${t[0]}</button>`).join('')}<div class="shelf-plus d-flex align-items-center justify-content-center gap-2"><span class="plus">+</span><svg width="7" height="7"><use href="#down"/></svg></div></div>
  <div class="shelf-body d-flex">${tools.map(t=>`<button class="btn tool d-flex flex-column align-items-center" style="flex-grow:${t[2]}">${ic(t[1])}${t[0].includes('|')?`<span class="cap2">${t[0].replace('|','<br>')}</span>`:`<span class="cap1">${t[0]}</span>`}</button>`).join('')}<div style="flex:${rest} 1 0"></div></div>`;
}
shelf('shelf1',[['Create',40],['Modify',43],['Model',40],['Polygon',48],['Deform',45],['Texture',46],['Rigging',45],['Muscles',47],['Charact…',56],['Constra…',57],['Hair Utils',52],['Guide P…',55],['Guide B…',55],['Terrain…',53],['Cloud FX',50],['Volume',46],['Game De…',60]],
[['Box','box',42],['Sphere','sphere',41],['Tube','tube',41],['Torus','torus',41],['Grid','gridi',41],['Null','nulli',41],['Line','linei',41],['Circle','circle',41],['Curve','curve',41],['Draw Curve','draw',54],['Path','pathi',42],['Spray Paint','spray',54],['Font','fonti',42],['Platonic|Solids','plato',68],['L-System','lsys',44],['Metaball','meta',46],['File','file',39]],120);
shelf('shelf2',[['Lights and C…',75],['Collisions',54],['Particles',50],['Grains',41],['Rigid Bodies',64],['Particle Fluids',71],['Viscous Fluids',71],['Oceans',45],['Fluid Contai…',75],['Populate Con…',80],['Container Tools',78],['Pyro FX',45],['Cloth',37],['Solid',36],['Wires',37],['Crowds',45],['Drive Simula…',76]],
[['Camera','cam',38],['Point Light','ptl',58],['Spot Light','spot',44],['Area Light','area',56],['Geometry|Light','geol',60],['Volume Light','fire',68],['Distant Light','dist',52],['Environment|Light','env',76],['Sky Light','sky',36],['GI Light','gi',50],['Caustic Light','caus',52],['Portal Light','portal',66],['Ambient Light','bulb',56],['Stereo|Camera','stereo',76],['VR Camera','vr',42],['Switcher','switch',54],['Gamepad|Camera','pad',58],['New Tool','hlogo',56]],22);
// Pane tabs
const tab=(t,w,a)=>`<button class="pane-tab d-flex justify-content-between ${a||''}" style="flex:0 0 ${w}px"><span>${t}</span><span class="x">×</span></button>`;
const ends=`<span class="d-flex align-items-center gap-3 ms-auto pe-2"><svg width="10" height="10"><path d="M0 0h10v10H0z" fill="#e6e6e6"/></svg><svg width="7" height="7"><use href="#down"/></svg></span>`;
$('ltabs').innerHTML=tab('Scene V…',67,'active')+tab('Animati…',69)+tab('Render…',69)+tab('Composi…',72)+tab('Motion…',69)+'<span class="plus ps-2">+</span>'+ends.replace('gap-3 ms-auto pe-2','gap-2 ms-auto pe-1');
$('rtabs').innerHTML=tab('<em>/obj/geo1/pointvop4</em>',120,'active')+tab('Tree View',78)+tab('Material Palette',102)+tab('Asset Browser',94)+'<span class="plus ps-2">+</span>'+ends;
// Viewer toolbars: '*' marks an active tool, '>' one with a submenu
const vt=(s,c)=>{const n=s.replace(/[*>]/g,'');return `<button class="btn ${c} d-flex align-items-center justify-content-center flex-shrink-0${s.includes('*')?' on':''}${s.includes('>')?' more':''}" aria-label="${n}">${n=='abc'?'<small>abc</small>':ic(n,'ic-20')}</button>`};
const arrow=d=>`<div class="scroller w-100 d-flex ${d>0?'justify-content-end':''}"><svg width="9" height="9"><path d="${d>0?'M2 1l6 3.500-6 3.500z':'M7 1L1 4.500 7 8z'}" fill="#000"/></svg></div>`;
$('vleft').innerHTML=arrow(-1)+'<div class="mode-box">'+['cone>','comp*>','ybox>'].map(s=>vt(s,'vt')).join('')+'</div><div class="sep mb-1"></div>'
 +['arrow>','mv','rotv','scl','pose','handle>'].map(s=>vt(s,'vt mb-px')).join('')+'<div class="sep my-1"></div>'
 +['mag1>','mag2>','mag3*>','mag4>'].map(s=>vt(s,'vt mb-px')).join('')+'<div class="sep my-1"></div>'+['cam*>','globe','dial>'].map(s=>vt(s,'vt mb-px')).join('')
 +'<div class="mt-auto pb-1">'+['rend>','reel>'].map(s=>vt(s,'vt')).join('')+'</div>';
$('vright').innerHTML=arrow(1)+['gplane*>','cplane>','lock','bx','bb>','bulb*>','bplus>','bring>','check*>','vis>'].map(s=>vt(s,'rt')).join('')+'<div class="sep mb-1"></div>'
 +['dot*','nrm','needle','n12','flag','tri','corner','uvg','ax3','eq','abc','pic*'].map(s=>vt(s,'rt')).join('')+'<div class="sep mt-1 mb-2"></div>'+vt('mark*>','rt')
 +'<div class="mt-auto d-flex flex-column"><div class="sep mb-1"></div>'+['info','four*','eye>'].map(s=>vt(s,'rt')).join('')+'</div>';
document.querySelectorAll('[aria-label=n12],[aria-label=tri]').forEach(b=>b.querySelector('svg').insertAdjacentHTML('beforeend','<text x="8" y="10" font-size="9" font-weight="700" fill="#e5e5e5">12</text>'));
// Network editor tool icons
$('nettools').innerHTML=[['wrench',0],['tree',0],['rows',0],['palette',1],['cells',0],['netb',1],['note',0],['img',0],['crate',0],['mag',1],['eye',0]].map(([n,g])=>`<button class="btn${g?' ms-3':''}" aria-label="${n}">${ic(n,'net-ic')}</button>`).join('');
// Perspective ground grid of the viewer; the view's origin sits at (42,168) of the window
const P=(X,Z)=>{const w=1-.0556*X-.149*Z;return [((286+100.2*X-66.4*Z)/w-42).toFixed(1),((463-.4*X+11*Z)/w-168).toFixed(1)]};
let mi='',ma='';
for(let i=-110;i<=25;i++){const d=`M${P(i/5,-14)}L${P(i/5,4)}`;i%5?mi+=d:ma+=d}
for(let j=-70;j<=20;j++){const d=`M${P(-22,j/5)}L${P(5,j/5)}`;j%5?mi+=d:ma+=d}
const pts=[[796,949],[798,962],[800,972],[803,982],[808,995],[815,1005],[820,1016],[812,1027],[808,1040],[797,1046],[790,1054],[775,1054],[760,1047],[750,1040],[740,1030],[730,1021],[720,1012],[711,1003],[705,1007],[697,1003],[688,995],[679,989],[664,988],[649,986],[652,998],[649,1018],[655,1030],[661,1040],[667,1050],[670,1063],[676,1075],[685,1084],[688,1095],[685,1104],[690,1115],[693,1126],[699,1137],[705,1150],[710,1163],[715,1174],[715,1190],[712,1203],[712,1217],[714,1229],[721,1243],[712,1256],[715,1270],[715,1286],[700,1291],[685,1292],[685,1307],[688,1322],[691,1337],[694,1355],[694,1370],[697,1385],[697,1403],[694,1421]].map(p=>[(p[0]/3-42).toFixed(1),(p[1]/3-8).toFixed(1)]);
$('scene').innerHTML=`<path d="${mi}" stroke="url(#gmi)" fill="none" stroke-width="1"/><path d="${ma}" stroke="url(#gmi)" fill="none" stroke-width="2"/>
<g fill="#6d828f" font-weight="700"><text font-size="9" transform="translate(216,394) rotate(105)">1</text><text font-size="15" transform="translate(175,526) rotate(105)">2</text><text font-size="20" transform="translate(113,730) rotate(110)">3</text></g>
<g fill="#7d8890" font-size="8" font-weight="700"><text x="22" y="248">-2</text><text x="123" y="269">-1</text><text x="236" y="294" font-size="10">0</text></g>
<g stroke="#f03c3c" fill="none"><path d="M244 295l6-27 3-3M244 295l34 7M244 295l-6 22"/></g><g fill="#f03c3c" font-size="11"><text x="248" y="270">y</text><text x="276" y="302">x</text><text x="236" y="320">z</text></g>
<polyline points="${pts.map(p=>p.join()).join(' ')}" fill="none" stroke="#101018"/>${pts.map(p=>`<circle cx="${p[0]}" cy="${p[1]}" r="2" fill="#0808d8"/>`).join('')}
<path d="M20 756v-12" stroke="#22e022" stroke-width="1.500"/><path d="M20 756l17 4" stroke="#e82222" stroke-width="1.500"/><path d="M20 756l-4 10" stroke="#1212d0" stroke-width="1.500"/>
<g font-size="11"><text x="20" y="745" fill="#22e022">y</text><text x="36" y="761" fill="#e82222">x</text><text x="14" y="772" fill="#1212d0">z</text></g>`;
// Network: boxes, notes and nodes lie on a free canvas whose corner is (424,171)
const at=(x,y,w,h)=>`style="left:${x-424}px;top:${y-171}px;${w?`width:${w}px;`:''}${h?`height:${h}px`:''}"`;
const mm='<span class="min-mark d-flex align-items-center justify-content-center"><i></i></span>';
const netbox=(x,y,w,h,t)=>`<div class="netbox position-absolute" ${at(x,y,w,h)}><div class="hd d-flex">${mm}<span class="ps-1">${t}</span></div></div>`;
const sticky=(x,y,w,h,t)=>`<div class="sticky position-absolute" ${at(x,y,w,h)}><div class="hd d-flex">${mm}</div><p>${t}</p></div>`;
// rows are [input label, output label, input colour, output colour]
function node(x,y,name,o,rows){
  const lock=o.lock?'<svg width="12" height="14" class="ms-1 mb-1" viewBox="0 0 12 14"><path d="M3 6V4c0-4 6-4 6 0v2" fill="none" stroke="#555f5d" stroke-width="2"/><path d="M0 6h12v8H0z" fill="#62706d"/></svg>':'';
  return `<div class="node position-absolute ${o.cls||''}" ${at(x,y)}><div class="node-name">${lock}${o.sub?`<div class="sub">${o.sub}</div>`:''}<div>${name}</div></div>
  <div class="node-hd d-flex align-items-center">${o.icon||''}<svg class="slash ms-auto" width="40" height="27"><use href="#slashes"/></svg></div>
  <div class="node-bd d-flex flex-column ${o.tall?'tall':''}">${rows.map(r=>`<div class="port d-flex align-items-center">${r[0]?`<i class="c-${r[2]}"></i><span class="lab c-${r[2]}">${r[0]}</span>`:''}${r[1]?`<span class="lab ms-auto c-${r[3]}">${r[1]}</span><i class="c-${r[3]}"></i>`:''}</div>`).join('')}</div>
  <div class="node-ft d-flex justify-content-end pe-2"><svg width="44" height="14"><use href="#${o.cls=='black'?'cooksd':'cooks'}"/></svg></div></div>`;
}
const out=(s,c)=>s.split(' ').map(n=>['',n,'',c]);
const wires=`<svg class="position-absolute top-0 start-0 w-100 h-100"><g transform="translate(-424,-171)" fill="none" stroke-width="1.200">
<path stroke="#4c9fe0" d="M604 641L611 640 680 613"/><path stroke="#6799c2" d="M680 613L890 530Q894 529 898 528M680 680.500H913M1051 680.500C1064 681 1072 674 1078 660L1117 578 1131 552C1135 545 1142 542 1151 542"/><path stroke="#4c9fe0" d="M604 680.500H680"/>
<path stroke="#6799c2" stroke-dasharray="3 3" d="M852 801C868 801 875 793 878 777L888 717C891 702 897 695 913 694"/>
<path stroke="#5bb0a4" d="M1036 528.500H1151M1289 528.500L1408 525"/><path stroke="#5dbf76" stroke-dasharray="2 2" d="M1545 525.500L1688 526"/></g></svg>`;
const digits=(a,b,f,g,cls)=>`<svg width="28" height="24" overflow="visible" ${cls}><text x="2" y="18" fill="${f}">${a}<tspan fill="${g}">${b}</tspan></text></svg>`;
$('canvas').insertAdjacentHTML('afterbegin',
 netbox(680,297,622,586,'实现从零到一的颜色渐变')+netbox(1373,415,226,215,'更方便的外部操控')
 +sticky(883,361,216,103,'整数转换成浮点数<br>从而实现浮点数结果')+sticky(945,766,297,104,'这里和<span class="lat">ratio</span>变量<span class="lat">$PT/($NPT-1) </span>一样')+wires
 +node(466,452,'geometryvopglobal1',{lock:1,tall:1},[...out('P v force','g'),...out('age life','t'),...out('id','b'),...out('Cd uv N','g'),...out('Time TimeInc Frame','t'),...out('ptnum primnum vtxnum numpt numprim numvtx','b'),...out('OpInput1 OpInput2 OpInput3 OpInput4','p')])
 +node(898,493,'inttofloat1',{icon:digits('2','.0','#444','#4d7ba3','font-family="Liberation Serif" font-size="18"')},[['ival','fval','b','t']])
 +node(1151,493,'divide1',{icon:'<svg width="26" height="24"><path d="M4 12.500h18" stroke="#000" stroke-width="3"/><circle cx="13" cy="4" r="2.500"/><circle cx="13" cy="20" r="2.500"/></svg>'},[['input1','div','t','t'],['input2','','b'],['input3','','w']])
 +node(913,645,'subtract1',{icon:'<svg width="26" height="24"><path d="M3 8.500h21v6H3z" stroke="#888"/></svg>'},[['input1','diff','b','b'],['input2','','b'],['input3','','b']])
 +node(714,766,'const1',{sub:'1',cls:'black',icon:digits('1','.0','#000','#000','stroke="#999" stroke-width=".8" font-weight="700" font-size="16"')},[['','Value','','t']])
 +node(1408,489,'ramp1',{sub:'ramp',cls:'yellow',icon:'<svg width="24" height="22" viewBox="0 0 24 22"><path d="M2 2h20v13H2z" fill="url(#rampg)" stroke="#000" stroke-width="1.500"/><path d="M3 20l4-8 4 8zM13 20l4-8 4 8z" fill="#eee" stroke="#000"/></svg>'},[['input','ramp','t','t'],['','ramp_the_basis_strings','','br'],['','ramp_the_key_positions','','dt'],['','ramp_the_key_values','','dt'],['','ramp_the_color_space','','p'],['','ramp_struct','','r']])
 +node(1688,452,'geometryvopoutput1',{lock:1},['P','v','force','Cd','N'].map(n=>[n,'','g'])));
// Transport buttons
const tr=['<path d="M3 4h3v16H3zM14 4v16l-7-8zM23 4v16l-8-8z"/>','<path d="M5 4h4v16H5z" fill="#6a9a3a"/><path d="M20 4v16l-9-8z"/>','<path d="M14 3v18L3 12zM17 4h3v16h-3z"/>','<path d="M19 2v20L4 12z"/>','<path d="M3 3h18v18H3z" fill="#e8e8e8"/>','<path d="M5 2v20l15-10z"/>','<path d="M10 3v18l11-9zM4 4h3v16H4z"/>','<path d="M4 4v16l9-8z"/><path d="M15 4h4v16h-4z" fill="#6a9a3a"/>','<path d="M18 4h3v16h-3zM10 4v16l7-8zM1 4v16l8-8z"/>'];
$('transport').innerHTML=tr.map((p,i)=>`<button class="btn pb d-flex align-items-center justify-content-center${i==4?' on':''}" aria-label="transport ${i+1}"><svg width="19" height="19" viewBox="0 0 24 24" fill="#d8d8d8">${p}</svg></button>`).join('');
$('pbopts').innerHTML=['rt1','loop','spk','pop'].map(n=>`<button class="btn sm-b d-flex align-items-center justify-content-center" aria-label="${n}">${ic(n,'ic-18')}</button>`).join('');
// Time ruler, frames 1 to 240
let tk='';for(let f=6;f<=240;f+=6){const l=(f-1)/240*100;tk+=`<div class="tick position-absolute${f%24?'':' maj'}" style="left:${l}%"></div>`;if(f%24==0)tk+=`<div class="tlab position-absolute" style="left:${l}%">${f}</div>`}
$('ruler').insertAdjacentHTML('beforeend',tk);
</script>
</body>
</html>
